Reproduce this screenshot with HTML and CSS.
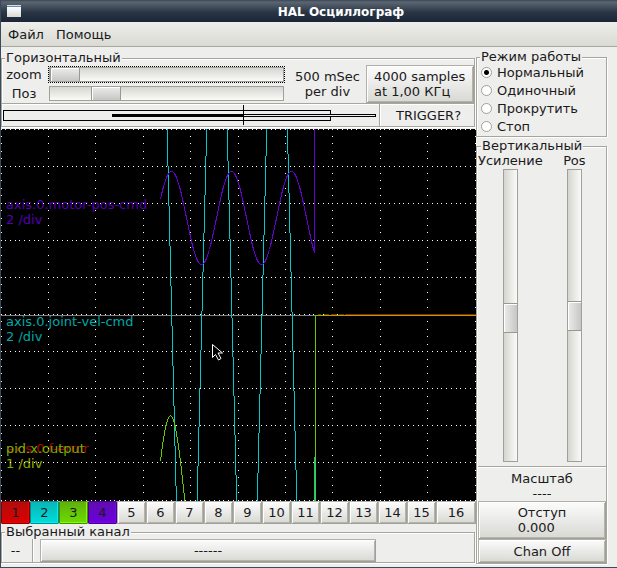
FILE: index.html
```html
<!DOCTYPE html>
<html lang="ru">
<head>
    <meta charset="UTF-8">
    <meta name="viewport" content="width=device-width, initial-scale=1.0">
    <title>HAL Осциллограф</title>
    <link rel="stylesheet" href="styles.css">
</head>
<body>
    <header class="titlebar">
        <span class="window-icon"></span>
        <h1>HAL Осциллограф</h1>
    </header>
    <nav class="menu">
        <button type="button">Файл</button>
        <button type="button">Помощь</button>
    </nav>

    <main>
        <div class="left">
            <fieldset class="horizontal">
                <legend>Горизонтальный</legend>
                <div class="timebase">
                    <div class="sliders">
                        <label for="zoom">zoom</label>
                        <div class="focus"><input type="range" id="zoom" value="0"></div>
                        <label for="hpos">Поз</label>
                        <div class="slot"><input type="range" id="hpos" value="20"></div>
                    </div>
                    <div class="perdiv">500 mSec<br>per div</div>
                    <button type="button" class="samples">4000 samples<br>at 1,00 КГц</button>
                </div>
                <div class="record">
                    <svg viewBox="0 0 377 22" shape-rendering="crispEdges">
                        <rect x="1.5" y="6.5" width="327" height="10" fill="none" stroke="#000"/>
                        <rect x="110" y="10" width="131" height="3"/>
                        <rect x="241.5" y="10.5" width="132" height="2" fill="#eee" stroke="#000"/>
                        <rect x="241" y="1" width="1" height="20"/>
                    </svg>
                    <div class="trigger">TRIGGER?</div>
                </div>
            </fieldset>

            <svg class="screen" viewBox="0 0 475 372">
                <g class="names">
                    <text x="5" y="80" class="violet">axis.0.motor-pos-cmd</text>
                    <text x="5" y="95" class="violet">2 /div</text>
                    <text x="5" y="197" class="cyan">axis.0.joint-vel-cmd</text>
                    <text x="5" y="212" class="cyan">2 /div</text>
                    <text x="5" y="324" class="red">axis.0.f-error</text>
                    <text x="5" y="339" class="red">1 /div</text>
                    <text x="5" y="324" class="green">pid.x.output</text>
                    <text x="5" y="339" class="green">1 /div</text>
                </g>
                <g shape-rendering="crispEdges">
                    <path id="grid" fill="#fff"/>
                    <rect x="0" y="186" width="315" height="1" fill="#808080"/>
                    <g fill="none">
                        <path stroke="#00c8c8" d="M166.1 0L175.4 372M205.7 0L196.1 372M226.2 0L235.7 372M265.7 0L256.3 372M286.4 0L295.8 372M313.5 328V372"/>
                        <path stroke="#e00000" d="M317 185.5h3M323 185.5h5M330 185.5h6M338 185.5h5M344 185.5H475"/>
                        <path id="pos" stroke="#6600cc"/>
                        <path id="out" stroke="#66c800"/>
                    </g>
                </g>
                <!-- курсор мыши -->
                <path fill="#000" stroke="#fff" d="M211.5 215.5v13l3-3 3 5.5 2.500-1.500-3-5.500h4.500z"/>
            </svg>

            <div class="channels">
                <button type="button" class="ch1">1</button>
                <button type="button" class="ch2">2</button>
                <button type="button" class="ch3">3</button>
                <button type="button" class="ch4">4</button>
                <button type="button">5</button>
                <button type="button">6</button>
                <button type="button">7</button>
                <button type="button">8</button>
                <button type="button">9</button>
                <button type="button">10</button>
                <button type="button">11</button>
                <button type="button">12</button>
                <button type="button">13</button>
                <button type="button">14</button>
                <button type="button">15</button>
                <button type="button">16</button>
            </div>

            <fieldset class="selected">
                <legend>Выбранный канал</legend>
                <div class="source">
                    <span class="number">--</span>
                    <button type="button">------</button>
                </div>
            </fieldset>
        </div>

        <div class="right">
            <fieldset class="mode">
                <legend>Режим работы</legend>
                <label><input type="radio" name="mode" checked>Нормальный</label>
                <label><input type="radio" name="mode">Одиночный</label>
                <label><input type="radio" name="mode">Прокрутить</label>
                <label><input type="radio" name="mode">Стоп</label>
            </fieldset>

            <fieldset class="vertical">
                <legend>Вертикальный</legend>
                <div class="levels">
                    <div class="level">
                        <label for="gain">Усиление</label>
                        <input type="range" id="gain" value="51">
                    </div>
                    <div class="level">
                        <label for="vpos">Pos</label>
                        <input type="range" id="vpos" value="50">
                    </div>
                </div>
                <div class="scale">Масштаб<br>----</div>
                <button type="button" class="offset"><span>Отступ<br>0.000</span></button>
                <button type="button" class="off">Chan Off</button>
            </fieldset>
        </div>
    </main>

    <script>
        // Сетка: 10x10 делений, точки по линиям
        var d = ""
        function dot(x, y) {
            d += `M${Math.floor(x)} ${Math.floor(y)}h1v1h-1z`
        }
        for (var i = 0; i <= 10; i++) {
            for (var k = 0; k <= 100; k++) dot(k * 4.74, i * 37.1)
            for (var k = 0; k <= 50; k++) dot(i * 47.4, k * 7.42)
        }
        document.getElementById("grid").setAttribute("d", d)

        // Синусоида с периодом 60, top - вершина, peak - её координата x
        function wave(from, to, peak, top, amp) {
            var p = ""
            for (var x = from; x <= to; x++) {
                var y = top + amp * (1 - Math.cos((x - peak) * Math.PI / 30))
                p += (p ? "L" : "M") + (x + 0.5) + " " + (Math.round(y) + 0.5)
            }
            return p
        }
        document.getElementById("pos").setAttribute("d", wave(159, 313, 170, 42, 46.5) + "V0")
        document.getElementById("out").setAttribute("d", wave(159, 184, 169, 286, 92) + "M314.5 372V186.5H475")
    </script>
</body>
</html>
```
FILE: styles.css
```css
* {
    box-sizing: border-box;
}

body {
    margin: 0;
    min-height: 100vh;
    font-family: "DejaVu Sans", sans-serif;
    font-size: 13px;
    line-height: 15px;
    color: #1a1a1a;
    background-color: #eeeeec;
    border-left: 1px solid #3c4a5c;
    border-bottom: 1px solid #3c4a5c;
}

.titlebar {
    display: flex;
    align-items: center;
    height: 22px;
    padding: 0 6px;
    background: linear-gradient(#3a4654, #5c6672 2px, #2a3646 12px, #1a2636);
}
.titlebar h1 {
    flex: 1;
    margin: 0;
    padding-top: 3px;
    padding-left: 50px;
    text-align: center;
    font-size: 12px;
    color: #fff;
}
.window-icon {
    width: 14px;
    height: 12px;
    border-top: 1px solid #ddd;
    background: linear-gradient(#5a8ad0 1px, #fff 1px, #d8d8d4);
}

.menu {
    display: flex;
    gap: 12px;
    height: 25px;
    padding: 0 7px;
    background: linear-gradient(#eeeeea, #dadad4);
    border-bottom: 1px solid #a8a8a0;
}
.menu button {
    padding: 1px 0 0;
    border: none;
    box-shadow: none;
    background: none;
}

main {
    display: flex;
    padding-top: 4px;
}
.left {
    flex: 1;
    min-width: 0;
    padding-top: 1px;
}
.right {
    width: 141px;
    padding-right: 10px;
}

fieldset {
    min-width: 0;
    margin: 0;
    padding: 0;
    border: 1px solid #a6a69e;
    box-shadow: 1px 1px #fff, inset 1px 1px #fff;
}
legend {
    margin-left: 3px;
    padding: 0 1px;
    line-height: 12px;
    background-color: #eeeeec;
}

button {
    padding: 0;
    font: inherit;
    color: inherit;
    border: 1px solid #b0b0a8;
    border-right-color: #a0a098;
    border-bottom-color: #a0a098;
    border-radius: 1px;
    background: linear-gradient(#fcfcfc, #d8d8d4);
    box-shadow: inset 1px 1px #fff, inset -1px -1px #b4b4aa;
}

/* Ползунки */
input[type="range"] {
    appearance: none;
    display: block;
    margin: 0;
    border: 1px solid #a0a09a;
    background: linear-gradient(#d6d6d0, #fafaf8);
}
input[type="range"]::-webkit-slider-thumb {
    appearance: none;
    width: 30px;
    height: 13px;
    border: 1px solid #989890;
    border-width: 0 1px;
    background: linear-gradient(#ececec, #c6c6c4);
    box-shadow: inset 1px 1px #fff;
}

.horizontal {
    margin-right: 1px;
    margin-bottom: 2px;
}
.timebase {
    display: flex;
    padding-top: 1px;
}
.sliders {
    flex: 1;
    display: grid;
    grid-template-columns: 46px 1fr;
    align-items: center;
    text-align: center;
}
.sliders label {
    padding-right: 2px;
}
.sliders input {
    width: 100%;
    height: 15px;
}
.focus {
    margin-top: 1px;
    border: 1px dotted #000;
}
.slot {
    padding: 2px 1px;
}
.perdiv {
    width: 81px;
    padding: 4px 0 0 4px;
    text-align: center;
}
.samples {
    width: 108px;
    height: 38px;
    padding-left: 7px;
    text-align: left;
}
.record {
    display: flex;
    height: 23px;
    border-top: 1px solid #a6a69e;
    box-shadow: inset 0 1px #fff;
}
.record svg {
    flex: 1;
    min-width: 0;
}
.trigger {
    width: 95px;
    padding: 4px 0 0 3px;
    text-align: center;
    border-left: 1px solid #a6a69e;
    box-shadow: inset 1px 0 #fff;
}

.screen {
    display: block;
    width: 100%;
    background-color: #000;
}
.names {
    font-size: 13px;
}
.violet {
    fill: #5500b4;
}
.cyan {
    fill: #00a8a8;
}
.red {
    fill: #b40000;
}
.green {
    fill: #66b400;
}

.channels {
    display: flex;
}
.channels button {
    width: 29px;
    height: 23px;
}
.channels button:last-child {
    flex: 1;
}
.channels .ch1 {
    background: linear-gradient(#b40c0c, #dc0000);
    border-color: #8c0000;
    box-shadow: inset -1px -1px #f00000;
}
.channels .ch2 {
    background: linear-gradient(#0cb4b4, #00dcdc);
    border-color: #008c8c;
    box-shadow: inset -1px -1px #00f0f0;
}
.channels .ch3 {
    background: linear-gradient(#60b00c, #6cdc00);
    border-color: #468c00;
    box-shadow: inset -1px -1px #80ff00;
}
.channels .ch4 {
    background: linear-gradient(#600cb0, #6c00dc);
    border-color: #46008c;
    box-shadow: inset -1px -1px #8000ff;
}

.selected {
    margin-top: 2px;
    margin-right: 1px;
}
.source {
    display: flex;
    padding-top: 1px;
}
.number {
    width: 31px;
    padding: 4px 3px 0 0;
    text-align: center;
    border-right: 1px solid #a6a69e;
    box-shadow: 1px 0 #fff;
}
.source button {
    flex: 1;
    height: 23px;
    margin-left: 7px;
    margin-right: 98px;
}

.mode {
    padding-bottom: 1px;
    margin-bottom: 3px;
}
.mode label {
    display: flex;
    align-items: center;
    gap: 5px;
    height: 18px;
    padding-left: 4px;
}
.mode input {
    appearance: none;
    width: 11px;
    height: 11px;
    margin: 0;
    border: 1px solid #a0a098;
    border-radius: 50%;
    background-color: #fff;
}
.mode input:checked {
    background: radial-gradient(#000 2px, #fff 3px);
}

.vertical {
    padding-left: 1px;
}
.levels {
    display: flex;
    padding: 1px 0 4px;
    border-bottom: 1px solid #a6a69e;
}
.level {
    flex: 1;
    display: flex;
    flex-direction: column;
    align-items: center;
    gap: 1px;
}
.level input {
    writing-mode: vertical-lr;
    width: 15px;
    height: 293px;
    background: linear-gradient(to right, #d6d6d0, #fafaf8);
}
.level input::-webkit-slider-thumb {
    width: 13px;
    height: 30px;
    border-width: 1px 0;
    background: linear-gradient(to right, #ececec, #c6c6c4);
}
.scale {
    padding-top: 4px;
    text-align: center;
    box-shadow: inset 0 1px #fff;
}
.offset, .off {
    display: block;
    width: 100%;
    height: 24px;
}
.offset {
    height: 38px;
}
.offset span {
    display: inline-block;
    text-align: left;
}
```
